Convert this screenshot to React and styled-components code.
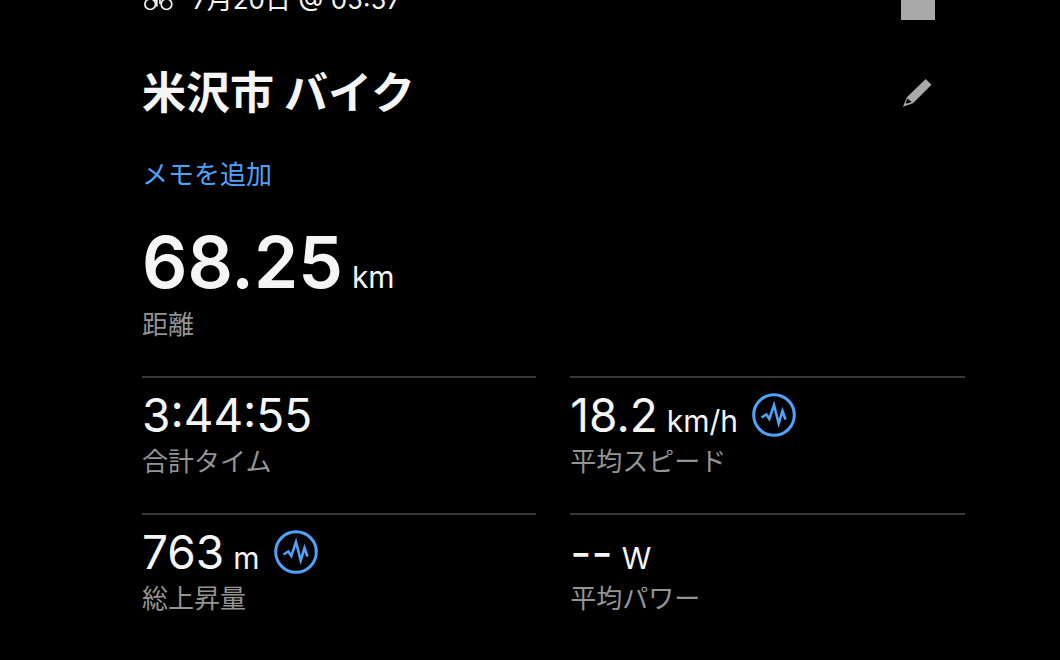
import React from 'react';
import styled, { createGlobalStyle } from 'styled-components';

const GlobalStyle = createGlobalStyle`
  body {
    margin: 0;
    background: #000000;
    color: #F5F5F5;
    font-family: Inter, 'Noto Sans CJK JP', sans-serif;
  }
`

const Page = styled.main`
  padding: 0 9% 40px 142px;
  overflow: hidden;
`

const Header = styled.header`
  display: flex;
  justify-content: space-between;
  align-items: flex-end;
  height: 40px;
  margin-top: -20px;
  padding-right: 30px;
`

const DateRow = styled.div`
  display: flex;
  align-items: center;
  gap: 18px;
  height: 40px;
  font-size: 26px;
  line-height: 40px;
`

const FlagButton = styled.button`
  width: 34px;
  height: 40px;
  padding: 0;
  border: none;
  background: #A8A8A8;
`

const TitleRow = styled.div`
  display: flex;
  justify-content: space-between;
  align-items: center;
  margin-top: 42px;
  padding-right: 33px;
`

const Title = styled.h1`
  margin: 0;
  padding-bottom: 6px;
  font-family: 'Noto Sans CJK JP', sans-serif;
  font-size: 44px;
  line-height: 56px;
  font-weight: 700;
`

const EditButton = styled.button`
  display: flex;
  padding: 0;
  border: none;
  background: none;
  color: #A8A8A8;
`

const MemoLink = styled.a`
  display: block;
  width: fit-content;
  margin-top: 33px;
  font-family: 'Noto Sans CJK JP', sans-serif;
  font-size: 26px;
  line-height: 32px;
  color: #4FA3FB;
  text-decoration: none;
`

const Distance = styled.section`
  margin: 37px 0 36px;
`

const Stats = styled.section`
  display: grid;
  grid-template-columns: 1fr 1fr;
  column-gap: 34px;
  row-gap: 36px;
`

const Stat = styled.div`
  padding-top: 9px;
  border-top: 2px solid #383838;
`

const ValueRow = styled.div`
  display: flex;
  align-items: center;
  gap: 14px;
`

const Value = styled.div`
  font-size: ${props => (props.$large ? '71px' : '46px')};
  line-height: ${props => (props.$large ? '72px' : '56px')};
  font-weight: ${props => (props.$large ? 600 : 400)};
  white-space: nowrap;
`

const Unit = styled.span`
  margin-left: 9px;
  font-size: 30px;
  line-height: 32px;
  font-weight: 400;
`

const Label = styled.div`
  margin-top: ${props => (props.$large ? '8px' : '0')};
  font-family: 'Noto Sans CJK JP', sans-serif;
  font-size: 26px;
  line-height: 34px;
  color: #949494;
`

const ChartButton = styled.button`
  display: flex;
  padding: 0;
  border: none;
  background: none;
  color: #4FA3FB;
`

const BikeIcon = () => (
  <svg width="32" height="24" viewBox="0 0 32 24" fill="none" stroke="#F5F5F5" strokeWidth="1.7">
    <circle cx="8.2" cy="16.2" r="5.3" />
    <circle cx="24.5" cy="16.2" r="5.3" />
    <path d="M14.8 7v11.5M18 7v9M9 6l5 7" />
  </svg>
)

const PencilIcon = () => (
  <svg width="30" height="30" viewBox="0 0 30 30" fill="currentColor">
    <path fillRule="evenodd" d="M23.7 1l5.8 5.8L11 25.2 1 28.8l3.8-9.6zM5.2 20.6l-1.5 5.2 6-1.9z" />
  </svg>
)

const ChartIcon = () => (
  <svg width="44" height="44" viewBox="0 0 44 44" fill="none" stroke="currentColor">
    <circle cx="22" cy="22" r="20.3" strokeWidth="3" />
    <path d="M9.5 24.5l4.8-3 3 4.3L22 12l4.7 18.5L30.500 18l3 8.500" strokeWidth="2.6" strokeLinejoin="miter" />
  </svg>
)

const stats = [
  { value: '3:44:55', label: '合計タイム' },
  { value: '18.2', unit: 'km/h', label: '平均スピード', chart: true },
  { value: '763', unit: 'm', label: '総上昇量', chart: true },
  { value: '--', unit: 'W', label: '平均パワー' }
]

const App = () => (
  <Page lang="ja">
    <GlobalStyle />
    <Header>
      <DateRow>
        <BikeIcon />
        <span>7月20日 @ 05:57</span>
      </DateRow>
      <FlagButton aria-label="フラグ" />
    </Header>
    <TitleRow>
      <Title>米沢市 バイク</Title>
      <EditButton aria-label="編集"><PencilIcon /></EditButton>
    </TitleRow>
    <MemoLink href="#memo">メモを追加</MemoLink>
    <Distance>
      <Value $large>68.25<Unit>km</Unit></Value>
      <Label $large>距離</Label>
    </Distance>
    <Stats>
      {stats.map(({ value, unit, label, chart }) => (
        <Stat key={label}>
          <ValueRow>
            <Value>{value}{unit ? <Unit>{unit}</Unit> : null}</Value>
            {chart ? <ChartButton aria-label={`${label}のグラフ`}><ChartIcon /></ChartButton> : null}
          </ValueRow>
          <Label>{label}</Label>
        </Stat>
      ))}
    </Stats>
  </Page>
)

export default App;
